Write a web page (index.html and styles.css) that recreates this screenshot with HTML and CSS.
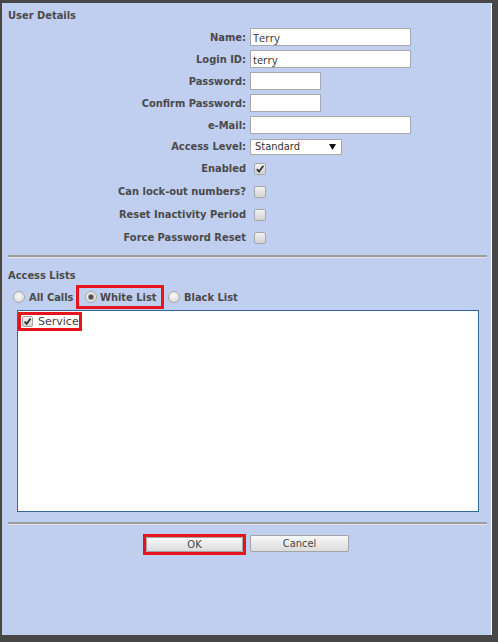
FILE: index.html
```html
<!DOCTYPE html>
<html>
<head>
<meta charset="utf-8">
<link rel="stylesheet" href="styles.css">
</head>
<body>
<div class="frame">
  <div class="panel">
    <div class="heading">User Details</div>
    <div class="details">
      <span class="lbl">Name:</span>
      <div class="ctl"><input class="field wide" value="Terry"></div>
      <span class="lbl">Login ID:</span>
      <div class="ctl"><input class="field wide" value="terry"></div>
      <span class="lbl">Password:</span>
      <div class="ctl"><input class="field short" type="password"></div>
      <span class="lbl">Confirm Password:</span>
      <div class="ctl"><input class="field short" type="password"></div>
      <span class="lbl">e-Mail:</span>
      <div class="ctl"><input class="field wide"></div>
      <span class="lbl">Access Level:</span>
      <div class="ctl">
        <div class="select"><span>Standard</span><svg class="arrow" width="7" height="6" viewBox="0 0 7 6"><polygon points="0,0 7,0 3.5,6" fill="#111"/></svg></div>
      </div>
      <span class="lbl">Enabled</span>
      <div class="ctl"><span class="cb on"><svg width="10" height="10" viewBox="0 0 10 10"><path d="M1.8 5.2 L4 7.6 L8.4 1.8" fill="none" stroke="#333" stroke-width="1.8"/></svg></span></div>
      <span class="lbl">Can lock-out numbers?</span>
      <div class="ctl"><span class="cb"></span></div>
      <span class="lbl">Reset Inactivity Period</span>
      <div class="ctl"><span class="cb"></span></div>
      <span class="lbl">Force Password Reset</span>
      <div class="ctl"><span class="cb"></span></div>
    </div>
    <div class="divider"></div>
    <div class="heading sub">Access Lists</div>
    <div class="radios">
      <div class="opt opt-all"><span class="radio"></span><span>All Calls</span></div>
      <div class="opt opt-white hl"><span class="radio on"></span><span>White List</span></div>
      <div class="opt opt-black"><span class="radio"></span><span>Black List</span></div>
    </div>
    <div class="listbox">
      <div class="item hl"><span class="cb on small"><svg width="9" height="9" viewBox="0 0 10 10"><path d="M1.8 5.2 L4 7.6 L8.4 1.8" fill="none" stroke="#333" stroke-width="1.9"/></svg></span><span>Service</span></div>
    </div>
    <div class="divider d2"></div>
    <div class="buttons">
      <div class="okwrap hl"><button class="btn ok">OK</button></div>
      <button class="btn cancel">Cancel</button>
    </div>
  </div>
</div>
</body>
</html>
```

FILE: styles.css
```css
* { box-sizing: border-box; }

body {
  margin: 0;
  background: #474747;
  font-family: "DejaVu Sans Condensed", "DejaVu Sans", sans-serif;
  font-size: 11px;
  color: #4a4a4a;
}

.frame {
  width: 498px;
  height: 642px;
  padding: 3px 0 0 2px;
}

.panel {
  width: 490px;
  height: 632px;
  background: #c0cef0;
  border-right: 1px solid #ffffff;
  padding: 5px 4px 0 6px;
}

.heading {
  line-height: 16px;
  font-weight: bold;
}

.sub {
  margin-top: 10px;
}

.details {
  display: grid;
  grid-template-columns: 238px 1fr;
  column-gap: 4px;
  grid-template-rows: repeat(5, 22px) 21px repeat(4, 23px);
  margin-top: 2px;
}

.lbl {
  text-align: right;
  align-self: center;
  white-space: nowrap;
  font-weight: bold;
}

.ctl {
  display: flex;
  align-items: center;
}

.field {
  height: 18px;
  border: 1px solid #a9a9a9;
  background: #fff;
  padding: 0 2px;
  margin: 0;
  font-family: "Open Sans", "Noto Sans", sans-serif;
  font-size: 11px;
  color: #333;
  outline: none;
}

.wide { width: 161px; }
.short { width: 71px; }

.select {
  width: 92px;
  height: 16px;
  border: 1px solid #a9a9a9;
  background: #fff;
  display: flex;
  align-items: center;
  justify-content: space-between;
  padding: 0 5px 0 4px;
  color: #333;
}

.cb {
  width: 12px;
  height: 12px;
  margin-left: 4px;
  border: 1px solid #a6a6a6;
  border-radius: 2px;
  background: linear-gradient(#f2f2f2, #d3d3d3);
  display: inline-flex;
  align-items: center;
  justify-content: center;
}

.cb.small {
  width: 11px;
  height: 11px;
  margin-left: 0;
}

.divider {
  margin-top: 6px;
  border-top: 2px solid #9c9c9c;
  border-bottom: 1px solid #e4e4e4;
}

.d2 {
  margin-top: 10px;
}

.radios {
  display: flex;
  height: 24px;
  margin-top: 1px;
  font-weight: bold;
}

.opt {
  display: flex;
  align-items: center;
  white-space: nowrap;
}

.opt-all {
  width: 68px;
  padding-left: 5px;
  gap: 4px;
}

.opt-white {
  width: 88px;
  padding-left: 6px;
  gap: 3px;
}

.opt-black {
  padding-left: 4px;
  gap: 4px;
}

.hl {
  border: 3px solid #e8141c;
}

.radio {
  width: 12px;
  height: 12px;
  flex: none;
  border-radius: 50%;
  border: 1px solid #a8a8a8;
  background: radial-gradient(circle at 45% 40%, #fbfbfb, #d2d2d2);
  display: inline-flex;
  align-items: center;
  justify-content: center;
}

.radio.on::after {
  content: "";
  width: 4px;
  height: 4px;
  border-radius: 50%;
  background: #4a4a4a;
  box-shadow: 0 0 0 1px #8a8a8a;
}

.listbox {
  margin: 1px 0 0 9px;
  width: 462px;
  height: 202px;
  border: 1px solid #3565a5;
  background: #fff;
}

.item {
  display: inline-flex;
  align-items: center;
  margin-top: 1px;
  width: 64px;
  height: 19px;
  padding-left: 1px;
  gap: 5px;
  color: #444;
  font-family: "DejaVu Sans", sans-serif;
}

.buttons {
  display: flex;
  align-items: flex-start;
  gap: 4px;
  margin-top: 9px;
  padding-left: 135px;
}

.okwrap {
  display: flex;
}

.btn {
  font-family: inherit;
  font-size: 11px;
  color: #444;
  background: linear-gradient(#f8f8f8, #dcdcdc);
  border: 1px solid #a4a4a4;
  border-radius: 2px;
  padding: 0;
  margin: 0;
  line-height: 13px;
}

.ok {
  width: 97px;
  height: 15px;
}

.cancel {
  width: 99px;
  height: 17px;
  margin-top: 1px;
}
```
